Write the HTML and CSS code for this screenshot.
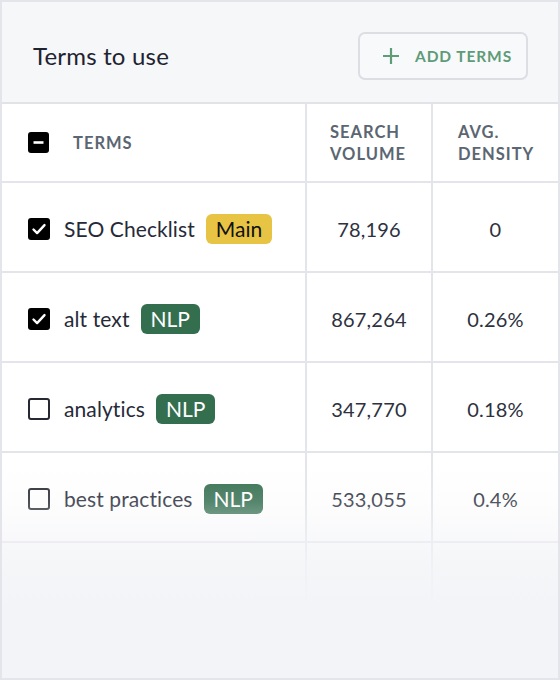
FILE: index.html
```html
<!DOCTYPE html>
<html>
<head>
<meta charset="utf-8">
<link rel="stylesheet" href="styles.css">
</head>
<body>
<div class="frame">
  <div class="top">
    <div class="title">Terms to use</div>
    <button class="add-btn">
      <svg class="plus" width="18" height="18" viewBox="0 0 18 18"><path d="M9 1v16M1 9h16" stroke="#5f9c7a" stroke-width="2.2" fill="none"/></svg>
      <span>ADD TERMS</span>
    </button>
  </div>
  <div class="table">
    <div class="cell head first">
      <span class="cb cb-minus"><svg width="21" height="21" viewBox="0 0 21 21"><path d="M5.5 10.5h10" stroke="#fff" stroke-width="2.6"/></svg></span>
      <span class="hlabel terms-label">TERMS</span>
    </div>
    <div class="cell head col"><span class="hlabel">SEARCH<br>VOLUME</span></div>
    <div class="cell head col col3"><span class="hlabel">AVG.<br>DENSITY</span></div>

    <div class="cell first"><span class="cb cb-on"><svg width="22" height="22" viewBox="0 0 22 22"><path d="M5.5 11.5l3.6 3.6 7.4-8" stroke="#fff" stroke-width="2.4" fill="none" stroke-linecap="round" stroke-linejoin="round"/></svg></span><span class="term">SEO Checklist</span><span class="badge main">Main</span></div>
    <div class="cell num">78,196</div>
    <div class="cell num">0</div>

    <div class="cell first"><span class="cb cb-on"><svg width="22" height="22" viewBox="0 0 22 22"><path d="M5.5 11.5l3.6 3.6 7.4-8" stroke="#fff" stroke-width="2.4" fill="none" stroke-linecap="round" stroke-linejoin="round"/></svg></span><span class="term">alt text</span><span class="badge nlp">NLP</span></div>
    <div class="cell num">867,264</div>
    <div class="cell num">0.26%</div>

    <div class="cell first"><span class="cb cb-off"></span><span class="term">analytics</span><span class="badge nlp">NLP</span></div>
    <div class="cell num">347,770</div>
    <div class="cell num">0.18%</div>

    <div class="cell first"><span class="cb cb-off"></span><span class="term">best practices</span><span class="badge nlp">NLP</span></div>
    <div class="cell num">533,055</div>
    <div class="cell num">0.4%</div>

    <div class="cell first"></div>
    <div class="cell num"></div>
    <div class="cell num"></div>
  </div>
  <div class="fade"></div>
</div>
</body>
</html>
```

FILE: styles.css
```css
* { box-sizing: border-box; }
html, body { margin: 0; padding: 0; background: #fff; }
body { font-family: Lato, "Noto Sans", sans-serif; }

.frame {
  position: relative;
  width: 560px;
  height: 680px;
  border: 2px solid #e4e5ea;
  background: #fff;
  overflow: hidden;
}

.top {
  height: 102px;
  background: #f6f7f9;
  border-bottom: 2px solid #e2e3e8;
  display: flex;
  justify-content: space-between;
  align-items: flex-start;
  padding: 30px 30px 0 31px;
}
.title {
  font-size: 24px;
  line-height: 48px;
  letter-spacing: 0.2px;
  color: #1f2330;
}
.add-btn {
  width: 170px;
  height: 48px;
  border: 2px solid #dcdee3;
  border-radius: 7px;
  background: #f8f9fa;
  display: flex;
  align-items: center;
  padding: 0 0 0 22px;
  gap: 15px;
  font-family: Lato, "Noto Sans", sans-serif;
  font-size: 15.5px;
  font-weight: 700;
  letter-spacing: 0.9px;
  color: #5e9b79;
  cursor: pointer;
}
.plus { display: block; }

.table {
  display: grid;
  grid-template-columns: 303px 124px 1fr;
  grid-auto-rows: 88px;
  grid-template-rows: 77px;
  gap: 2px;
  background: #e4e5ea;
  height: 574px;
}
.cell {
  background: #fff;
  display: flex;
  align-items: center;
}
.cell.first { padding-left: 26px; padding-top: 3px; }
.cell.head.first { padding-top: 0; }
.cell.col { padding-left: 23px; }
.cell.col3 { padding-left: 25px; }

.hlabel {
  font-size: 16.5px;
  font-weight: 700;
  line-height: 22px;
  color: #5b6672;
  letter-spacing: 1px;
}
.terms-label { margin-left: 24px; }

.cb {
  width: 22px;
  height: 22px;
  border-radius: 3px;
  flex: none;
  display: block;
}
.cb svg { display: block; }
.cb-minus { background: #000; width: 21px; height: 21px; }
.cb-on { background: #000; }
.cb-off { border: 2px solid #262932; background: #fff; }

.term {
  margin-left: 14px;
  font-size: 21px;
  letter-spacing: 0.1px;
  color: #262a38;
}
.badge {
  margin-left: 11px;
  height: 30px;
  padding: 0 10px;
  border-radius: 6px;
  font-size: 21px;
  line-height: 30px;
}
.badge.main { background: #e8c444; color: #111; }
.badge.nlp { background: #336e4f; color: #fff; }

.num {
  justify-content: center;
  font-size: 20px;
  letter-spacing: 0.2px;
  color: #2d3140;
  padding-top: 3px;
}

.fade {
  position: absolute;
  left: 0;
  right: 0;
  top: 460px;
  bottom: 0;
  pointer-events: none;
  background: linear-gradient(to bottom,
    rgba(243,244,247,0) 0px,
    rgba(243,244,247,0.18) 40px,
    rgba(243,244,247,0.8) 100px,
    rgba(243,244,247,1) 145px);
}
```
